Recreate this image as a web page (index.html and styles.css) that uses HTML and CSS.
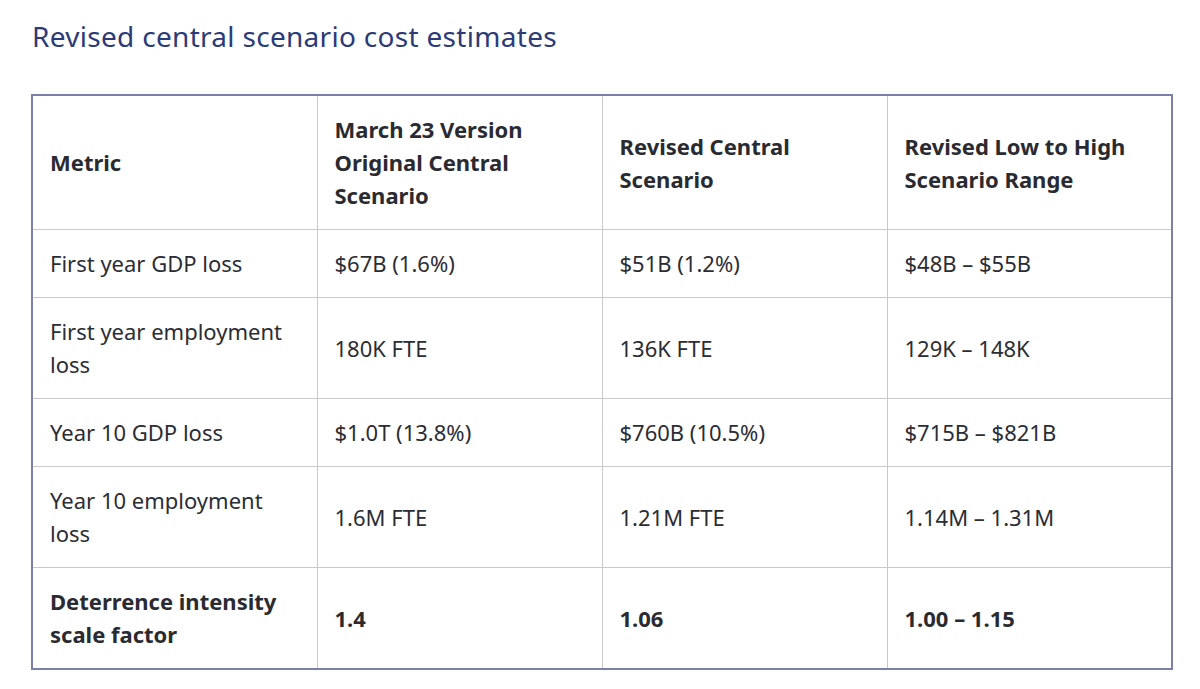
FILE: index.html
```html
<!DOCTYPE html>
<html>
<head>
<meta charset="utf-8">
<link rel="stylesheet" href="styles.css">
</head>
<body>
<div class="page">
  <h2 class="title">Revised central scenario cost estimates</h2>
  <table class="costs">
    <thead>
      <tr>
        <th>Metric</th>
        <th>March 23 Version Original Central Scenario</th>
        <th>Revised Central Scenario</th>
        <th>Revised Low to High Scenario Range</th>
      </tr>
    </thead>
    <tbody>
      <tr><td>First year GDP loss</td><td>$67B (1.6%)</td><td>$51B (1.2%)</td><td>$48B – $55B</td></tr>
      <tr><td>First year employment loss</td><td>180K FTE</td><td>136K FTE</td><td>129K – 148K</td></tr>
      <tr><td>Year 10 GDP loss</td><td>$1.0T (13.8%)</td><td>$760B (10.5%)</td><td>$715B – $821B</td></tr>
      <tr><td>Year 10 employment loss</td><td>1.6M FTE</td><td>1.21M FTE</td><td>1.14M – 1.31M</td></tr>
      <tr class="strong"><td>Deterrence intensity scale factor</td><td>1.4</td><td>1.06</td><td>1.00 – 1.15</td></tr>
    </tbody>
  </table>
</div>
</body>
</html>
```
FILE: styles.css
```css
html, body {
  margin: 0;
  padding: 0;
  background: #ffffff;
}
.page {
  padding: 16px 0 0 31px;
  font-family: "Noto Sans", "Open Sans", sans-serif;
  color: #2b2d34;
}
.title {
  margin: 0 0 38px 1px;
  font-size: 28px;
  font-weight: 400;
  line-height: 40px;
  letter-spacing: 0.3px;
  color: #2c3b78;
}
.costs {
  width: 1142px;
  border-collapse: collapse;
  table-layout: fixed;
  border: 2px solid #7a80aa;
}
.costs th, .costs td {
  border: 1px solid #c9c9c9;
  padding: 17px 17px 17px 17px;
  text-align: left;
  vertical-align: middle;
  font-size: 22px;
  line-height: 33px;
}
.costs th {
  font-weight: 700;
  color: #2a2b31;
}
.costs tr.strong td {
  font-weight: 700;
  color: #2a2b31;
}
```
